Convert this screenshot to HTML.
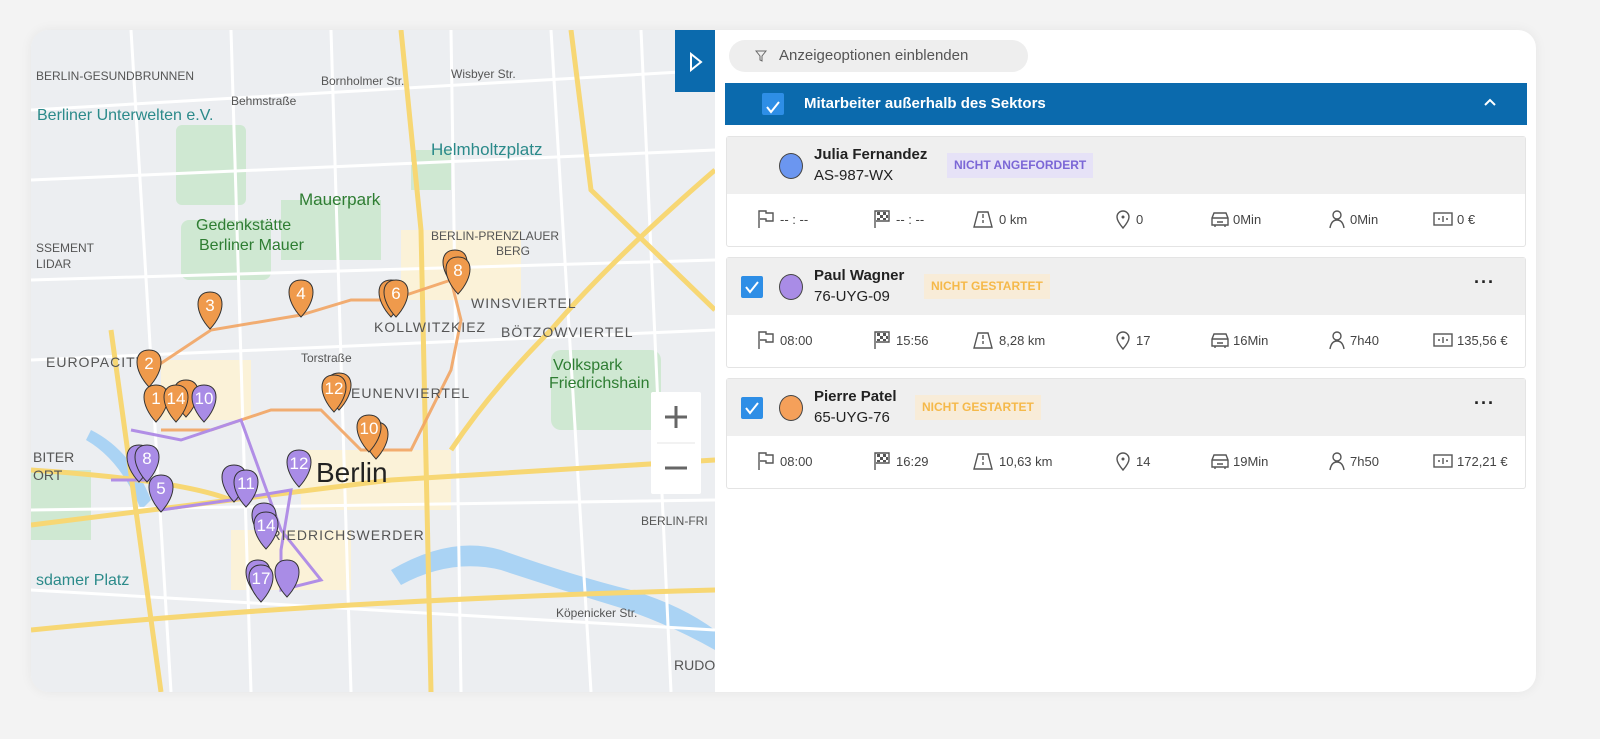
<!DOCTYPE html>
<html><head><meta charset="utf-8"><style>
*{box-sizing:border-box;margin:0;padding:0}
body{width:1600px;height:739px;background:#f3f3f3;font-family:"Liberation Sans",sans-serif;position:relative;overflow:hidden}
.card{position:absolute;left:31px;top:30px;width:1505px;height:662px;background:#fff;border-radius:18px;overflow:hidden;box-shadow:0 0 12px rgba(0,0,0,.06)}
.map{position:absolute;left:0;top:0;width:684px;height:662px;background:#eceef1}
.tog{position:absolute;left:644px;top:0;width:40px;height:62px;background:#0b6aad}
.abs{position:absolute}
.filter{position:absolute;left:698px;top:10px;width:299px;height:32px;border-radius:16px;background:#eeeeee;color:#555;font-size:15px;line-height:32px;padding-left:50px}
.bar{position:absolute;left:694px;top:53px;width:802px;height:42px;background:#0b6aad;color:#fff;font-weight:bold;font-size:15px;line-height:42px;padding-left:79px}
.cb{position:absolute;width:22px;height:22px;background:#2e8ee6;border-radius:2px}
.emp{position:absolute;left:695px;width:800px;height:111px;border:1px solid #e4e4e4;border-radius:3px;background:#fff}
.eh{height:57px;background:#efefef;position:relative}
.dot{position:absolute;left:52px;top:16px;width:24px;height:26px;border-radius:50%;border:1px solid #444}
.nm{position:absolute;left:87px;top:9px;font-size:15px;font-weight:bold;color:#222}
.pl{position:absolute;left:87px;top:30px;font-size:15px;color:#222}
.tag{position:absolute;top:16px;height:25px;line-height:25px;font-size:12px;font-weight:bold;padding:0 7px}
.st{position:relative;height:53px;font-size:13px;color:#444}
.st span{position:absolute;top:18px}
.st svg{position:absolute;top:15px}
.dots{position:absolute;right:30px;top:14px;font-size:18px;font-weight:bold;color:#222;letter-spacing:1px}
</style></head><body>
<div class="card">
<div class="map">
<svg width="684" height="662" viewBox="0 0 684 662" font-family="Liberation Sans,sans-serif">
<defs><path id="pin" d="M0 17 C-16 0 -16 -20 0 -20 C16 -20 16 0 0 17Z"/></defs>
<rect width="684" height="662" fill="#eceef1"/>
<g fill="#cfe8d2">
<rect x="145" y="95" width="70" height="80" rx="6"/><rect x="250" y="170" width="100" height="60"/><rect x="520" y="320" width="110" height="80" rx="10"/><rect x="0" y="440" width="60" height="70"/><rect x="150" y="190" width="90" height="60" rx="8"/><rect x="380" y="120" width="40" height="40"/></g>
<g fill="#fbf2d8"><rect x="370" y="200" width="120" height="70"/><rect x="130" y="330" width="90" height="60"/><rect x="270" y="420" width="150" height="60"/><rect x="200" y="500" width="120" height="60"/></g>
<path d="M360 540 Q420 505 470 520 Q540 545 600 560 Q650 575 684 600 L684 620 Q640 595 590 578 Q530 560 470 540 Q420 528 370 555Z" fill="#aad3f4"/>
<path d="M60 400 Q100 420 120 470 L110 480 Q90 430 55 410Z" fill="#aad3f4"/>
<g stroke="#fff" stroke-width="3" fill="none">
<path d="M0 80 L684 40"/><path d="M0 150 L684 120"/><path d="M0 250 L684 230"/><path d="M0 330 L684 300"/><path d="M0 480 L684 470"/><path d="M0 560 L684 600"/>
<path d="M100 0 L140 662"/><path d="M200 0 L220 662"/><path d="M300 0 L320 662"/><path d="M420 0 L430 662"/><path d="M520 0 L560 662"/><path d="M610 0 L640 662"/></g>
<g stroke="#f7d774" stroke-width="5" fill="none">
<path d="M0 495 Q200 470 360 450 Q520 440 684 430"/><path d="M370 0 L390 200 L400 662"/><path d="M0 440 Q150 450 200 470"/><path d="M684 140 Q580 230 520 300 Q460 360 420 420"/><path d="M540 0 L560 160 L684 280"/><path d="M80 300 L130 662"/><path d="M0 600 Q300 570 684 560"/></g>
<g stroke="#f2a463" stroke-width="3" fill="none" opacity=".9"><path d="M120 340 L180 300 L270 285 L320 270 L360 270 L420 250 L430 290 L420 340 L380 420 L330 420 L290 380 L240 380 L180 400 L130 400"/></g>
<g stroke="#b18ee6" stroke-width="3" fill="none"><path d="M80 450 L130 450 L130 480 L200 470 L260 460 L250 520 L250 560 L290 550 L250 500 L210 390 L150 410 L100 400"/></g>
<g font-size="12" fill="#555"><text x="5" y="50">BERLIN-GESUNDBRUNNEN</text><text x="6" y="90" fill="#2b8a8a" font-size="16">Berliner Unterwelten e.V.</text><text x="400" y="125" fill="#2b8a8a" font-size="17">Helmholtzplatz</text><text x="268" y="175" fill="#2e7d32" font-size="17">Mauerpark</text><text x="165" y="200" fill="#2e7d32" font-size="16">Gedenkstätte</text><text x="168" y="220" fill="#2e7d32" font-size="16">Berliner Mauer</text><text x="400" y="210">BERLIN-PRENZLAUER</text><text x="465" y="225">BERG</text><text x="440" y="278" font-size="14" letter-spacing="1">WINSVIERTEL</text><text x="343" y="302" font-size="14" letter-spacing="1">KOLLWITZKIEZ</text><text x="470" y="307" font-size="14" letter-spacing="1">BÖTZOWVIERTEL</text><text x="522" y="340" fill="#2e7d32" font-size="16">Volkspark</text><text x="518" y="358" fill="#2e7d32" font-size="16">Friedrichshain</text><text x="15" y="337" font-size="14" letter-spacing="1">EUROPACITY</text><text x="2" y="432" font-size="14">BITER</text><text x="2" y="450" font-size="14">ORT</text><text x="230" y="510" font-size="14" letter-spacing="1">FRIEDRICHSWERDER</text><text x="285" y="452" font-size="28" fill="#222">Berlin</text><text x="5" y="555" fill="#2b8a8a" font-size="16">sdamer Platz</text><text x="320" y="368" font-size="14" letter-spacing="1">EUNENVIERTEL</text><text x="610" y="495">BERLIN-FRI</text><text x="643" y="640" font-size="14">RUDO</text><text x="290" y="55">Bornholmer Str.</text><text x="420" y="48">Wisbyer Str.</text><text x="200" y="75">Behmstraße</text><text x="270" y="332">Torstraße</text><text x="525" y="587">Köpenicker Str.</text><text x="5" y="222">SSEMENT</text><text x="5" y="238">LIDAR</text></g>
<g fill="#ef9a4c" stroke="#333" stroke-width="1" font-size="17" text-anchor="middle">
<g transform="translate(179,282)"><use href="#pin"/><text y="-1" fill="#fff" stroke="none">3</text></g>
<g transform="translate(270,270)"><use href="#pin"/><text y="-1" fill="#fff" stroke="none">4</text></g>
<g transform="translate(360,270)"><use href="#pin"/></g>
<g transform="translate(365,270)"><use href="#pin"/><text y="-1" fill="#fff" stroke="none">6</text></g>
<g transform="translate(424,240)"><use href="#pin"/></g>
<g transform="translate(427,247)"><use href="#pin"/><text y="-1" fill="#fff" stroke="none">8</text></g>
<g transform="translate(118,340)"><use href="#pin"/><text y="-1" fill="#fff" stroke="none">2</text></g>
<g transform="translate(125,375)"><use href="#pin"/><text y="-1" fill="#fff" stroke="none">1</text></g>
<g transform="translate(155,370)"><use href="#pin"/></g>
<g transform="translate(145,375)"><use href="#pin"/><text y="-1" fill="#fff" stroke="none">14</text></g>
<g transform="translate(308,363)"><use href="#pin"/></g>
<g transform="translate(303,365)"><use href="#pin"/><text y="-1" fill="#fff" stroke="none">12</text></g>
<g transform="translate(345,412)"><use href="#pin"/></g>
<g transform="translate(338,405)"><use href="#pin"/><text y="-1" fill="#fff" stroke="none">10</text></g>
</g>
<g fill="#a98ce6" stroke="#333" stroke-width="1" font-size="17" text-anchor="middle">
<g transform="translate(173,375)"><use href="#pin"/><text y="-1" fill="#fff" stroke="none">10</text></g>
<g transform="translate(108,435)"><use href="#pin"/></g>
<g transform="translate(116,435)"><use href="#pin"/><text y="-1" fill="#fff" stroke="none">8</text></g>
<g transform="translate(130,465)"><use href="#pin"/><text y="-1" fill="#fff" stroke="none">5</text></g>
<g transform="translate(203,455)"><use href="#pin"/></g>
<g transform="translate(215,460)"><use href="#pin"/><text y="-1" fill="#fff" stroke="none">11</text></g>
<g transform="translate(268,440)"><use href="#pin"/><text y="-1" fill="#fff" stroke="none">12</text></g>
<g transform="translate(233,493)"><use href="#pin"/></g>
<g transform="translate(235,502)"><use href="#pin"/><text y="-1" fill="#fff" stroke="none">14</text></g>
<g transform="translate(227,550)"><use href="#pin"/></g>
<g transform="translate(230,555)"><use href="#pin"/><text y="-1" fill="#fff" stroke="none">17</text></g>
<g transform="translate(256,550)"><use href="#pin"/></g>
</g>
<rect x="620" y="362" width="50" height="102" fill="#fff" rx="2"/>
<path d="M634 387h22M645 376v22M634 438h22" stroke="#666" stroke-width="3"/>
<line x1="626" y1="413" x2="664" y2="413" stroke="#e6e6e6"/>
</svg>
</div>
<div class="tog"><svg class="abs" style="left:14px;top:22px" width="14" height="20"><path d="M2 2L12 10L2 18Z" fill="none" stroke="#fff" stroke-width="2"/></svg></div>
<div class="filter"><svg class="abs" style="left:26px;top:10px" width="12" height="12"><path d="M1 1h10L7 6v5L5 10V6Z" fill="none" stroke="#666"/></svg>Anzeigeoptionen einblenden</div>
<div class="bar"><div class="cb" style="left:37px;top:10px"><svg width="22" height="22"><path d="M5 11l4 5 8-10" stroke="#fff" stroke-width="2" fill="none"/></svg></div>Mitarbeiter außerhalb des Sektors<svg class="abs" style="right:30px;top:14px" width="14" height="10"><path d="M2 8l5-5 5 5" stroke="#fff" stroke-width="2" fill="none"/></svg></div>

<div class="emp" style="top:106px">
<div class="eh"><div class="dot" style="background:#6b96f0"></div><div class="nm">Julia Fernandez</div><div class="pl">AS-987-WX</div><div class="tag" style="left:220px;background:#e6e2f7;color:#7b67d6">NICHT ANGEFORDERT</div></div>
<div class="st" id="s1"></div>
</div>
<div class="emp" style="top:227px">
<div class="eh"><div class="cb" style="left:14px;top:18px"><svg width="22" height="22"><path d="M5 11l4 5 8-10" stroke="#fff" stroke-width="2" fill="none"/></svg></div><div class="dot" style="background:#a98ce6"></div><div class="nm">Paul Wagner</div><div class="pl">76-UYG-09</div><div class="tag" style="left:197px;background:#f8ecd8;color:#f5b94a">NICHT GESTARTET</div><div class="dots">···</div></div>
<div class="st" id="s2"></div>
</div>
<div class="emp" style="top:348px">
<div class="eh"><div class="cb" style="left:14px;top:18px"><svg width="22" height="22"><path d="M5 11l4 5 8-10" stroke="#fff" stroke-width="2" fill="none"/></svg></div><div class="dot" style="background:#f5a05a"></div><div class="nm">Pierre Patel</div><div class="pl">65-UYG-76</div><div class="tag" style="left:188px;background:#f8ecd8;color:#f5b94a">NICHT GESTARTET</div><div class="dots">···</div></div>
<div class="st" id="s3"></div>
</div>
</div>
<script>
var icons=[
'<path d="M2 19V2h7v2h7v8H9v-2H3" fill="none" stroke="#555" stroke-width="1.4"/>',
'<path d="M2 19V2h14v10H3" fill="none" stroke="#555" stroke-width="1.4"/><path d="M4 3h3v3H4zM10 3h3v3h-3zM7 6h3v3H7zM13 6h2v3h-2zM4 9h3v2H4zM10 9h3v2h-3z" fill="#555"/>',
'<path d="M1 18L5 3h10l4 15Z M10 5v4M10 11v3" fill="none" stroke="#555" stroke-width="1.4"/>',
'<path d="M10 19C4 12 4 9 4 8a6 6 0 0 1 12 0c0 1 0 4-6 11Z" fill="none" stroke="#555" stroke-width="1.4"/><circle cx="10" cy="8" r="1.5" fill="#555"/>',
'<path d="M2 9l2-5h12l2 5v7H2Z M2 9h16M5 16v2M15 16v2M7 13h6" fill="none" stroke="#555" stroke-width="1.4"/>',
'<circle cx="10" cy="6" r="4" fill="none" stroke="#555" stroke-width="1.4"/><path d="M3 19c1-6 4-8 7-8s6 2 7 8" fill="none" stroke="#555" stroke-width="1.4"/>',
'<rect x="1" y="4" width="18" height="12" fill="none" stroke="#555" stroke-width="1.4"/><path d="M5 10h2M13 10h2M10 7v6" stroke="#555" stroke-width="1.4"/>'];
var xs=[30,146,246,386,483,600,706];
var data=[["-- : --","-- : --","0 km","0","0Min","0Min","0 €"],["08:00","15:56","8,28 km","17","16Min","7h40","135,56 €"],["08:00","16:29","10,63 km","14","19Min","7h50","172,21 €"]];
for(var r=0;r<3;r++){var h="";for(var i=0;i<7;i++){h+='<svg width="20" height="20" style="left:'+xs[i]+'px">'+icons[i]+'</svg><span style="left:'+(xs[i]+(i==2?26:(i==6?24:23)))+'px">'+data[r][i]+'</span>';}document.getElementById("s"+(r+1)).innerHTML=h;}
</script>
</body></html>
